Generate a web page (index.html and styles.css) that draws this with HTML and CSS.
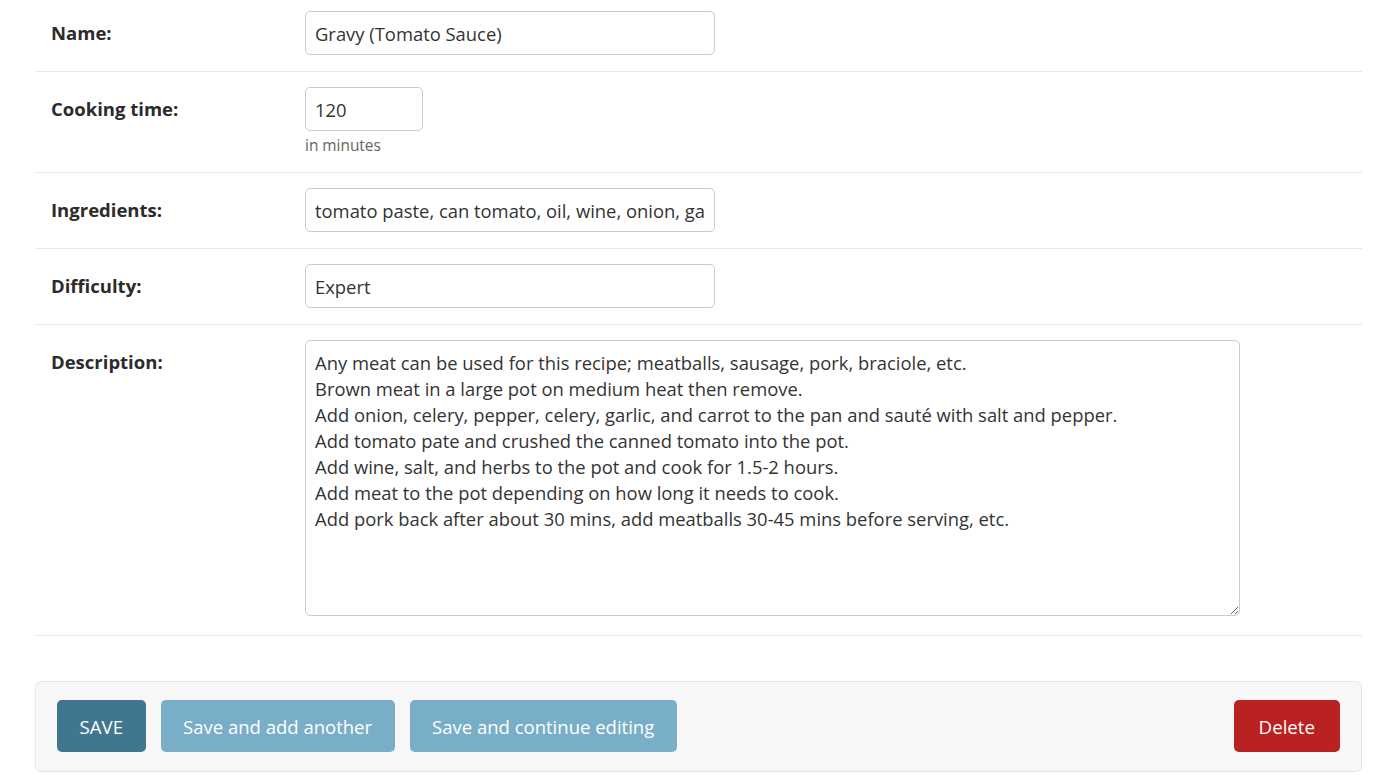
FILE: index.html
```html
<!DOCTYPE html>
<html>
<head>
<meta charset="utf-8">
<link rel="stylesheet" href="styles.css">
</head>
<body>
<div class="page">
  <form class="form">
    <div class="row row-first">
      <label class="label">Name:</label>
      <div class="field"><input class="input input-wide" type="text" value="Gravy (Tomato Sauce)"></div>
    </div>
    <div class="row">
      <label class="label">Cooking time:</label>
      <div class="field">
        <input class="input input-small" type="text" value="120">
        <div class="help">in minutes</div>
      </div>
    </div>
    <div class="row">
      <label class="label">Ingredients:</label>
      <div class="field"><input class="input input-wide" type="text" value="tomato paste, can tomato, oil, wine, onion, garlic, celery, pepper, carrot, salt, herbs, meat"></div>
    </div>
    <div class="row">
      <label class="label">Difficulty:</label>
      <div class="field"><input class="input input-wide" type="text" value="Expert"></div>
    </div>
    <div class="row row-desc">
      <label class="label">Description:</label>
      <div class="field"><textarea class="textarea">Any meat can be used for this recipe; meatballs, sausage, pork, braciole, etc.
Brown meat in a large pot on medium heat then remove.
Add onion, celery, pepper, celery, garlic, and carrot to the pan and sauté with salt and pepper.
Add tomato pate and crushed the canned tomato into the pot.
Add wine, salt, and herbs to the pot and cook for 1.5-2 hours.
Add meat to the pot depending on how long it needs to cook.
Add pork back after about 30 mins, add meatballs 30-45 mins before serving, etc.</textarea></div>
    </div>
    <div class="submit-row">
      <button type="button" class="btn btn-save">SAVE</button>
      <button type="button" class="btn btn-light">Save and add another</button>
      <button type="button" class="btn btn-light">Save and continue editing</button>
      <span class="spacer"></span>
      <button type="button" class="btn btn-delete">Delete</button>
    </div>
  </form>
</div>
</body>
</html>
```

FILE: styles.css
```css
* { box-sizing: border-box; }
html, body { margin: 0; padding: 0; background: #fff; }
body {
  font-family: "Open Sans", "Noto Sans", sans-serif;
  color: #333;
  font-size: 18.4px;
}
.page { padding: 0 28px 0 35px; }
.form { display: flex; flex-direction: column; }
.row {
  display: flex;
  align-items: flex-start;
  padding: 15px 0 16px 16px;
  border-bottom: 1px solid #e8e8e8;
}
.row-first { padding-top: 11px; }
.row-desc { padding-bottom: 19px; }
.label {
  width: 254px;
  flex: none;
  font-weight: 700;
  font-size: 18.5px;
  line-height: 44px;
  height: 44px;
  color: #2b2b2b;
}
.field { display: flex; flex-direction: column; }
.input {
  font-family: inherit;
  font-size: 18.4px;
  color: #333;
  height: 44px;
  padding: 0 9px;
  border: 1px solid #ccc;
  border-radius: 5px;
  background: #fff;
  outline: none;
}
.input-wide { width: 410px; }
.input-small { width: 118px; }
.help {
  color: #666;
  font-size: 15.4px;
  line-height: 20px;
  margin-top: 5px;
}
.textarea {
  display: block;
  font-family: inherit;
  font-size: 18.4px;
  color: #333;
  width: 935px;
  height: 276px;
  padding: 9px 9px;
  line-height: 26px;
  border: 1px solid #ccc;
  border-radius: 5px;
  outline: none;
  resize: both;
}
.submit-row {
  display: flex;
  align-items: center;
  gap: 15px;
  margin-top: 45px;
  padding: 18px 21px 19px;
  background: #f7f7f7;
  border: 1px solid #e6e6e6;
  border-radius: 6px;
}
.spacer { flex: 1; }
.btn {
  font-family: inherit;
  font-size: 18.5px;
  height: 52px;
  padding: 0 22.5px;
  border: none;
  border-radius: 5px;
  color: #fff;
  cursor: pointer;
}
.btn-save { background: #417690; font-size: 18.7px; }
.btn-light { background: #79aec8; }
.btn-delete { background: #ba2121; padding: 0 25px; font-size: 18.7px; }
```
